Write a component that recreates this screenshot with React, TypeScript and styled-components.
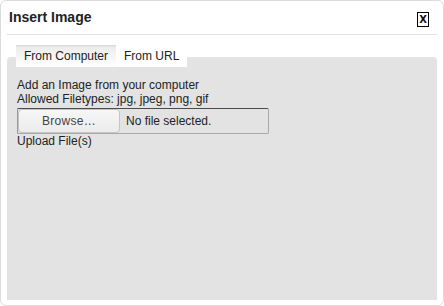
import { createGlobalStyle } from 'styled-components';
import styled from 'styled-components';
import { useState } from 'react';

const GlobalStyle = createGlobalStyle`
  html, body {
    margin: 0;
    padding: 0;
    background: #fff;
  }
  body {
    font-family: "Liberation Sans", Arial, sans-serif;
    color: #222;
  }
`;

const Dialog = styled.div`
  box-sizing: border-box;
  width: 444px;
  height: 306px;
  border: 1px solid #dcdcdc;
  border-radius: 6px;
  background: #fff;
  display: flex;
  flex-direction: column;
  padding: 0 6px 5px 6px;
`;

const Header = styled.div`
  height: 33px;
  display: flex;
  align-items: center;
  justify-content: space-between;
  border-bottom: 1px solid #e3e3e3;
  padding: 0 8px 0 2px;
`;

const Title = styled.h1`
  margin: 0;
  font-size: 14px;
  font-weight: bold;
  color: #222;
  position: relative;
  top: -1px;
`;

const CloseButton = styled.button`
  box-sizing: border-box;
  width: 12px;
  height: 15px;
  margin-top: 4px;
  padding: 0;
  border: 1px solid #000;
  background: #fff;
  font-family: "DejaVu Sans", sans-serif;
  font-size: 10px;
  font-weight: bold;
  line-height: 13px;
  color: #111;
  cursor: pointer;
`;

const Body = styled.div`
  flex: 1;
  display: flex;
  flex-direction: column;
  padding-top: 10px;
`;

const TabBar = styled.ul`
  list-style: none;
  margin: 0 0 -10px 0;
  padding: 0 0 0 9px;
  display: flex;
  position: relative;
  z-index: 1;
`;

const Tab = styled.li<{ $active: boolean }>`
  height: 22px;
  box-sizing: border-box;
  padding: 0 8px;
  display: flex;
  align-items: center;
  font-size: 12px;
  color: #222;
  cursor: pointer;
  background: ${({ $active }) =>
    $active ? 'linear-gradient(to bottom, #d4d4d4 0, #ececec 2px, #fff 100%)' : '#fff'};
`;

const Panel = styled.div`
  flex: 1;
  background: #e3e3e3;
  border-radius: 4px 4px 0 0;
  padding: 21px 10px 0 10px;
  font-size: 12px;
  line-height: 14px;
  color: #222;
`;

const Line = styled.div`
  white-space: nowrap;
`;

const FileField = styled.div`
  box-sizing: border-box;
  width: 252px;
  height: 26px;
  margin-top: 2px;
  display: flex;
  align-items: center;
  gap: 6px;
  border: 1px solid #a8a8a8;
  border-top-color: #4a4a4a;
  border-left-color: #9a9a9a;
  border-radius: 0 2px 2px 0;
`;

const BrowseButton = styled.button`
  box-sizing: border-box;
  width: 102px;
  height: 24px;
  margin: 0;
  border: 1px solid #c4c4c4;
  border-radius: 4px;
  background: linear-gradient(to bottom, #f7f7f7, #ececec);
  font-family: "Liberation Sans", Arial, sans-serif;
  font-size: 12px;
  color: #444;
  letter-spacing: 0.3px;
  cursor: pointer;
`;

const FileName = styled.span`
  font-size: 12px;
  color: #222;
`;

const tabs = ['From Computer', 'From URL'];

export default function App() {
  const [active, setActive] = useState(0);

  return (
    <>
      <GlobalStyle />
      <Dialog>
        <Header>
          <Title>Insert Image</Title>
          <CloseButton>X</CloseButton>
        </Header>
        <Body>
          <TabBar>
            {tabs.map((t, i) => (
              <Tab key={t} $active={i === active} onClick={() => setActive(i)}>
                {t}
              </Tab>
            ))}
          </TabBar>
          <Panel>
            <Line>Add an Image from your computer</Line>
            <Line>Allowed Filetypes: jpg, jpeg, png, gif</Line>
            <FileField>
              <BrowseButton>Browse…</BrowseButton>
              <FileName>No file selected.</FileName>
            </FileField>
            <Line>Upload File(s)</Line>
          </Panel>
        </Body>
      </Dialog>
    </>
  );
}
